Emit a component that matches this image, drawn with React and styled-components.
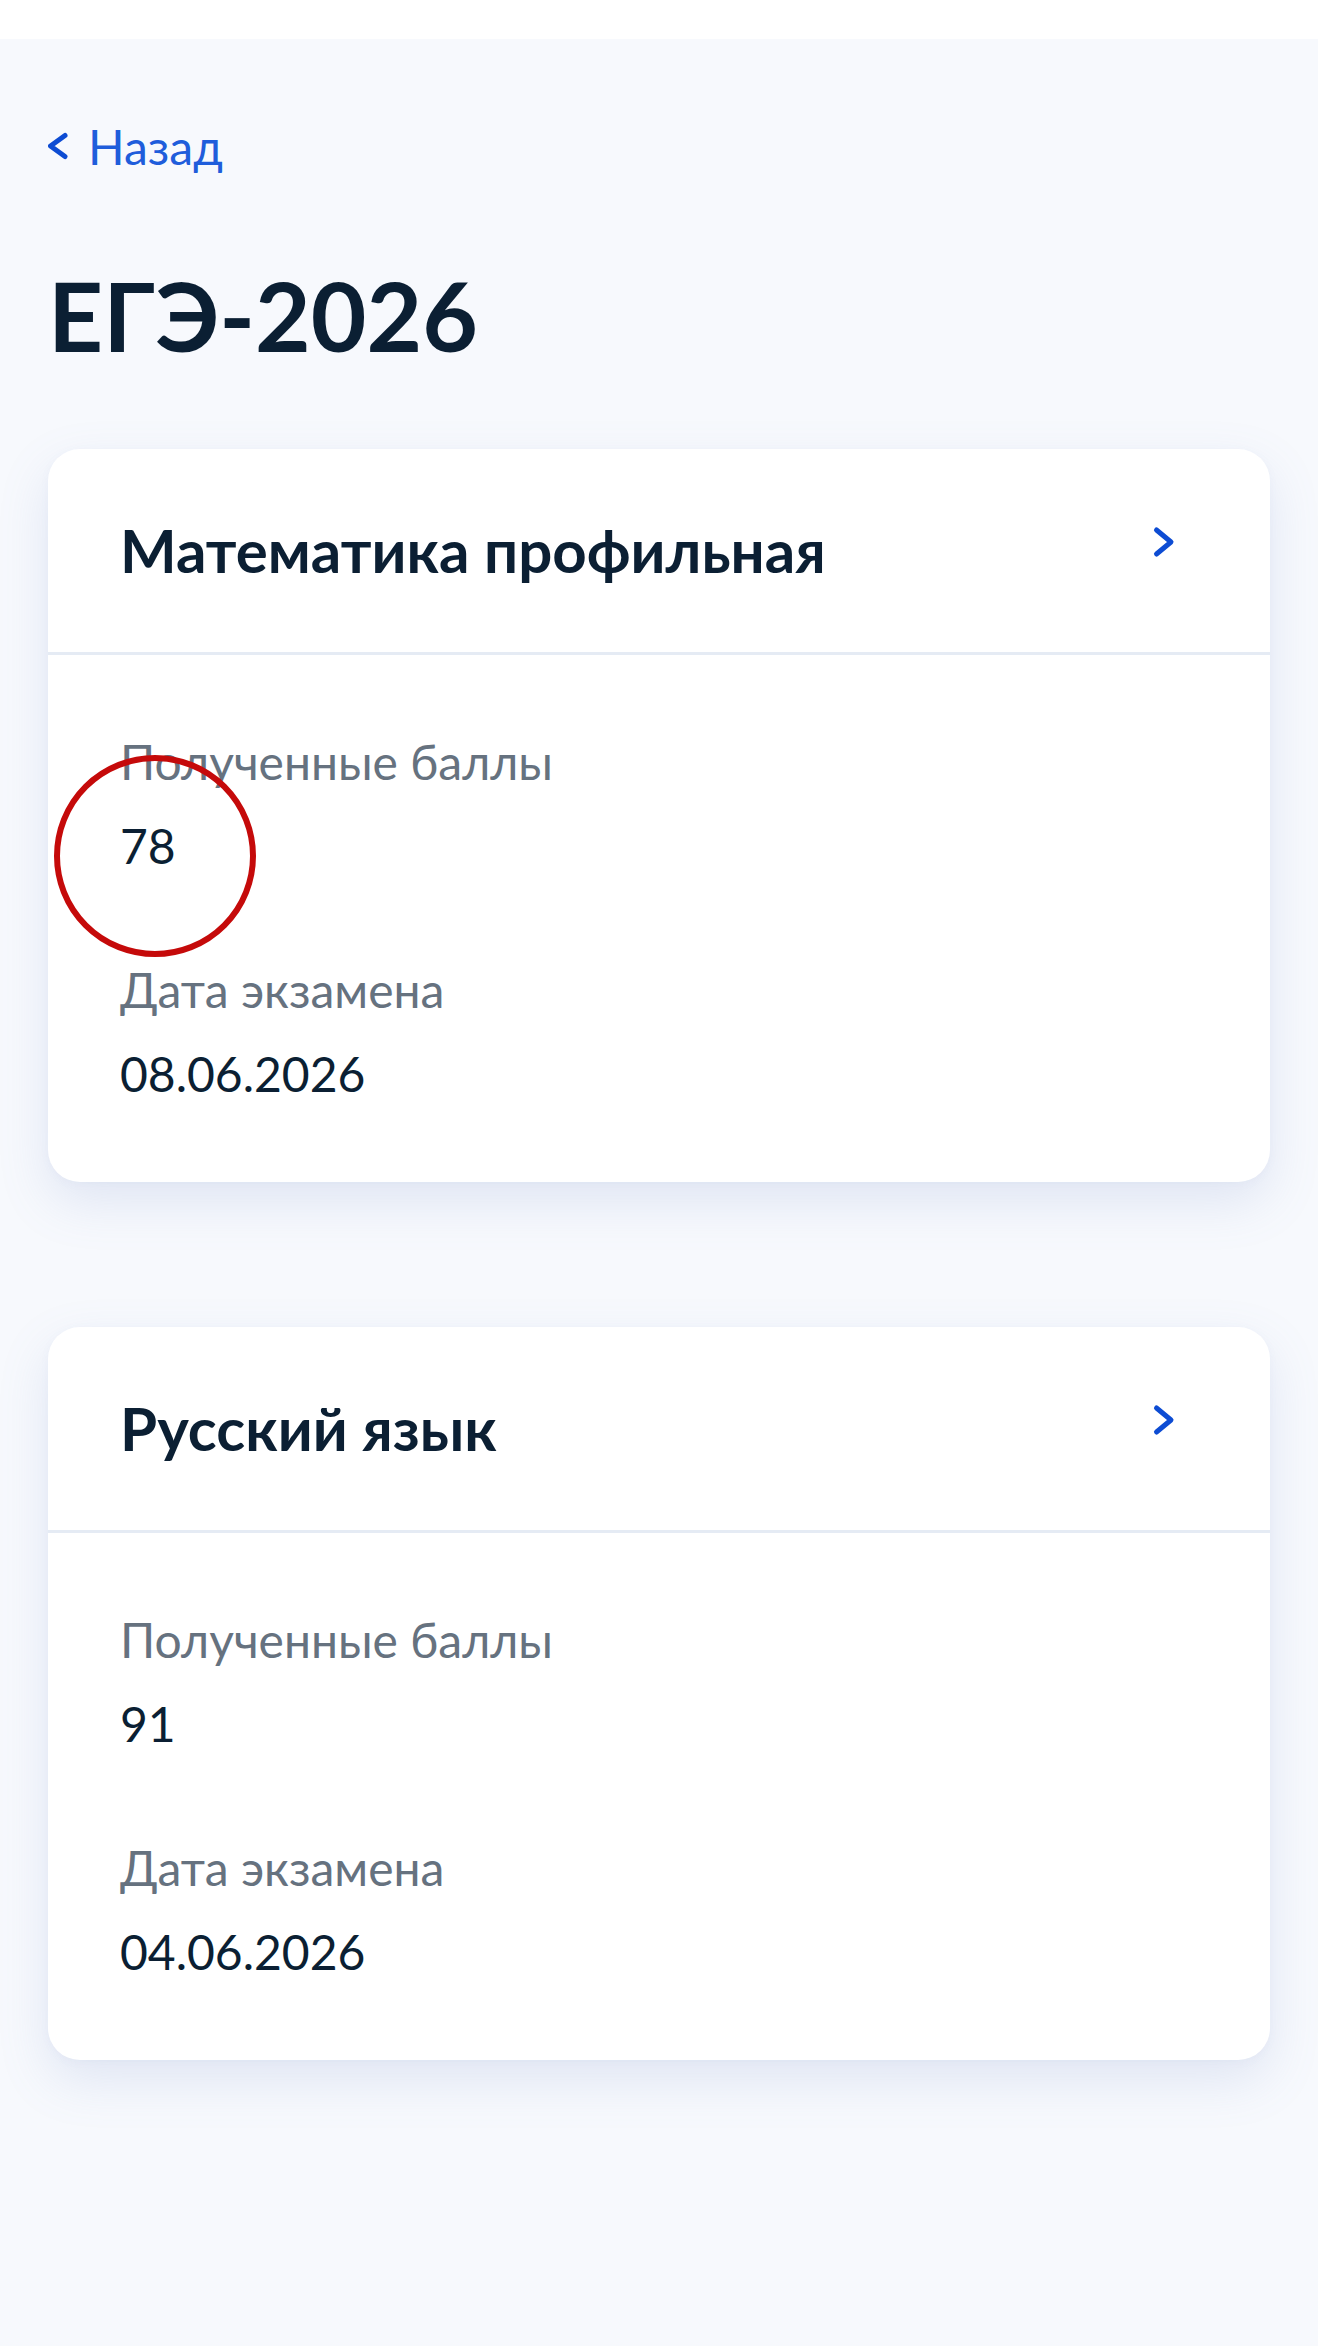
import React from "react";
import styled, { createGlobalStyle } from "styled-components";

const GlobalStyle = createGlobalStyle`
  html, body {
    margin: 0;
    padding: 0;
    background: #f7f9fd;
  }
  * { box-sizing: border-box; }
`;

const Page = styled.div`
  min-height: 100vh;
  background: #f7f9fd;
  font-family: Lato, "Noto Sans", "Liberation Sans", sans-serif;
  color: #0b1f33;
`;

const TopBar = styled.div`
  height: 39px;
  background: #ffffff;
`;

const Content = styled.main`
  padding: 78px 48px 120px;
`;

const BackLink = styled.a`
  display: inline-flex;
  align-items: center;
  gap: 20px;
  font-size: 48px;
  line-height: 60px;
  color: #1f5ddb;
  text-decoration: none;
  cursor: pointer;
`;

const Title = styled.h1`
  margin: 80px 0 77px 0;
  font-size: 96px;
  line-height: 115px;
  font-weight: 700;
  color: #0b1f33;
`;

const CardList = styled.div`
  display: flex;
  flex-direction: column;
  gap: 145px;
`;

const Card = styled.section`
  position: relative;
  background: #ffffff;
  border-radius: 32px;
  box-shadow: 0 20px 50px rgba(110, 135, 195, 0.17), 0 2px 8px rgba(120, 140, 190, 0.05);
`;

const CardHeader = styled.div`
  display: flex;
  align-items: center;
  justify-content: space-between;
  padding: 65px 72px 66px;
  border-bottom: 3px solid #e5ebf4;
`;

const CardTitle = styled.h2`
  margin: 0;
  font-size: 60px;
  line-height: 72px;
  font-weight: 700;
  color: #0b1f33;
`;

const IconBox = styled.span`
  display: flex;
  width: 72px;
  height: 72px;
  flex: none;
`;

const CardBody = styled.div`
  display: flex;
  flex-direction: column;
  gap: 84px;
  padding: 77px 72px 78px;
`;

const Field = styled.div`
  display: flex;
  flex-direction: column;
  gap: 24px;
`;

const Label = styled.div`
  font-size: 48px;
  line-height: 60px;
  color: #66727f;
`;

const Value = styled.div`
  font-size: 48px;
  line-height: 60px;
  color: #0b1f33;
`;

const Mark = styled.span`
  position: absolute;
  left: 6px;
  top: 306px;
  width: 202px;
  height: 202px;
  border: 6px solid #c50a0a;
  border-radius: 50%;
  pointer-events: none;
`;

const BackChevron = () => (
  <svg width="20" height="30" viewBox="0 0 20 30" fill="none">
    <path
      d="M17 3.5 L2.5 14 L17 24.5"
      stroke="#0d4cd3"
      strokeWidth="5"
      strokeLinecap="round"
      strokeLinejoin="round"
    />
  </svg>
);

const NextChevron = () => (
  <svg width="72" height="72" viewBox="0 0 72 72" fill="none">
    <path
      d="M30.5 16 L45 28 L30.5 40"
      stroke="#0d4cd3"
      strokeWidth="5"
      strokeLinecap="round"
      strokeLinejoin="round"
    />
  </svg>
);

const exams = [
  { title: "Математика профильная", score: "78", date: "08.06.2026", marked: true },
  { title: "Русский язык", score: "91", date: "04.06.2026", marked: false },
];

export default function App() {
  return (
    <Page>
      <GlobalStyle />
      <TopBar />
      <Content>
        <BackLink>
          <BackChevron />
          Назад
        </BackLink>
        <Title>ЕГЭ-2026</Title>
        <CardList>
          {exams.map((e) => (
            <Card key={e.title}>
              <CardHeader>
                <CardTitle>{e.title}</CardTitle>
                <IconBox>
                  <NextChevron />
                </IconBox>
              </CardHeader>
              <CardBody>
                <Field>
                  <Label>Полученные баллы</Label>
                  <Value>{e.score}</Value>
                </Field>
                <Field>
                  <Label>Дата экзамена</Label>
                  <Value>{e.date}</Value>
                </Field>
              </CardBody>
              {e.marked && <Mark />}
            </Card>
          ))}
        </CardList>
      </Content>
    </Page>
  );
}
